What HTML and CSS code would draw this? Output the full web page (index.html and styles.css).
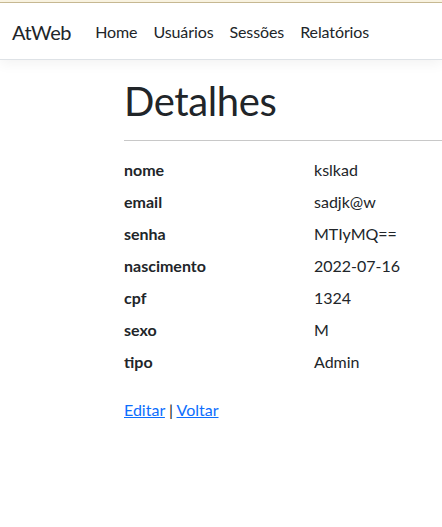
FILE: index.html
```html
<!DOCTYPE html>
<html lang="pt">
<head>
<meta charset="utf-8">
<title>Detalhes - AtWeb</title>
<link rel="stylesheet" href="styles.css">
</head>
<body>
<div class="topline"></div>
<header class="navbar">
  <a class="brand" href="#">AtWeb</a>
  <nav class="nav">
    <a class="nav-link" href="#">Home</a>
    <a class="nav-link" href="#">Usuários</a>
    <a class="nav-link" href="#">Sessões</a>
    <a class="nav-link" href="#">Relatórios</a>
  </nav>
</header>
<main class="main">
  <h1 class="title">Detalhes</h1>
  <hr class="rule">
  <dl class="details">
    <dt>nome</dt><dd>kslkad</dd>
    <dt>email</dt><dd>sadjk@w</dd>
    <dt>senha</dt><dd>MTIyMQ==</dd>
    <dt>nascimento</dt><dd>2022-07-16</dd>
    <dt>cpf</dt><dd>1324</dd>
    <dt>sexo</dt><dd>M</dd>
    <dt>tipo</dt><dd>Admin</dd>
  </dl>
  <div class="actions"><a href="#">Editar</a> | <a href="#">Voltar</a></div>
</main>
</body>
</html>
```
FILE: styles.css
```css
* { box-sizing: border-box; }
html, body {
  margin: 0;
  padding: 0;
  overflow: hidden;
}
body {
  font-family: Lato, "Open Sans", sans-serif;
  font-size: 16px;
  line-height: 1.5;
  color: #212529;
  background: #fff;
}
.topline {
  height: 3px;
  background: #faf4e2;
  border-bottom: 1px solid #c9bb94;
}
.navbar {
  display: flex;
  align-items: center;
  height: 57px;
  padding: 9px 12px 7px;
  border-bottom: 1px solid #dee2e6;
  box-shadow: 0 4px 12px rgba(0, 0, 0, 0.05);
}
.brand {
  font-size: 20px;
  line-height: 30px;
  padding: 5px 0;
  margin-right: 16px;
  letter-spacing: -0.4px;
  color: #212529;
  text-decoration: none;
}
.nav {
  display: flex;
}
.nav-link {
  padding: 8px;
  letter-spacing: -0.1px;
  color: #212529;
  text-decoration: none;
}
.main {
  padding: 16px 0 0 124px;
}
.title {
  margin: 0;
  padding-top: 2px;
  font-size: 40px;
  line-height: 46px;
  font-weight: 400;
  letter-spacing: -0.4px;
}
.rule {
  margin: 16px 0;
  border: 0;
  border-top: 1px solid #c8c8c8;
}
.details {
  display: grid;
  grid-template-columns: 190px auto;
  margin: 0 0 16px;
}
.details dt,
.details dd {
  margin: 0 0 7px;
  padding-top: 1px;
}
.details dt {
  font-weight: 700;
}
.actions {
  padding-top: 1px;
}
.actions a {
  color: #0d6efd;
  text-decoration: underline;
}
```
